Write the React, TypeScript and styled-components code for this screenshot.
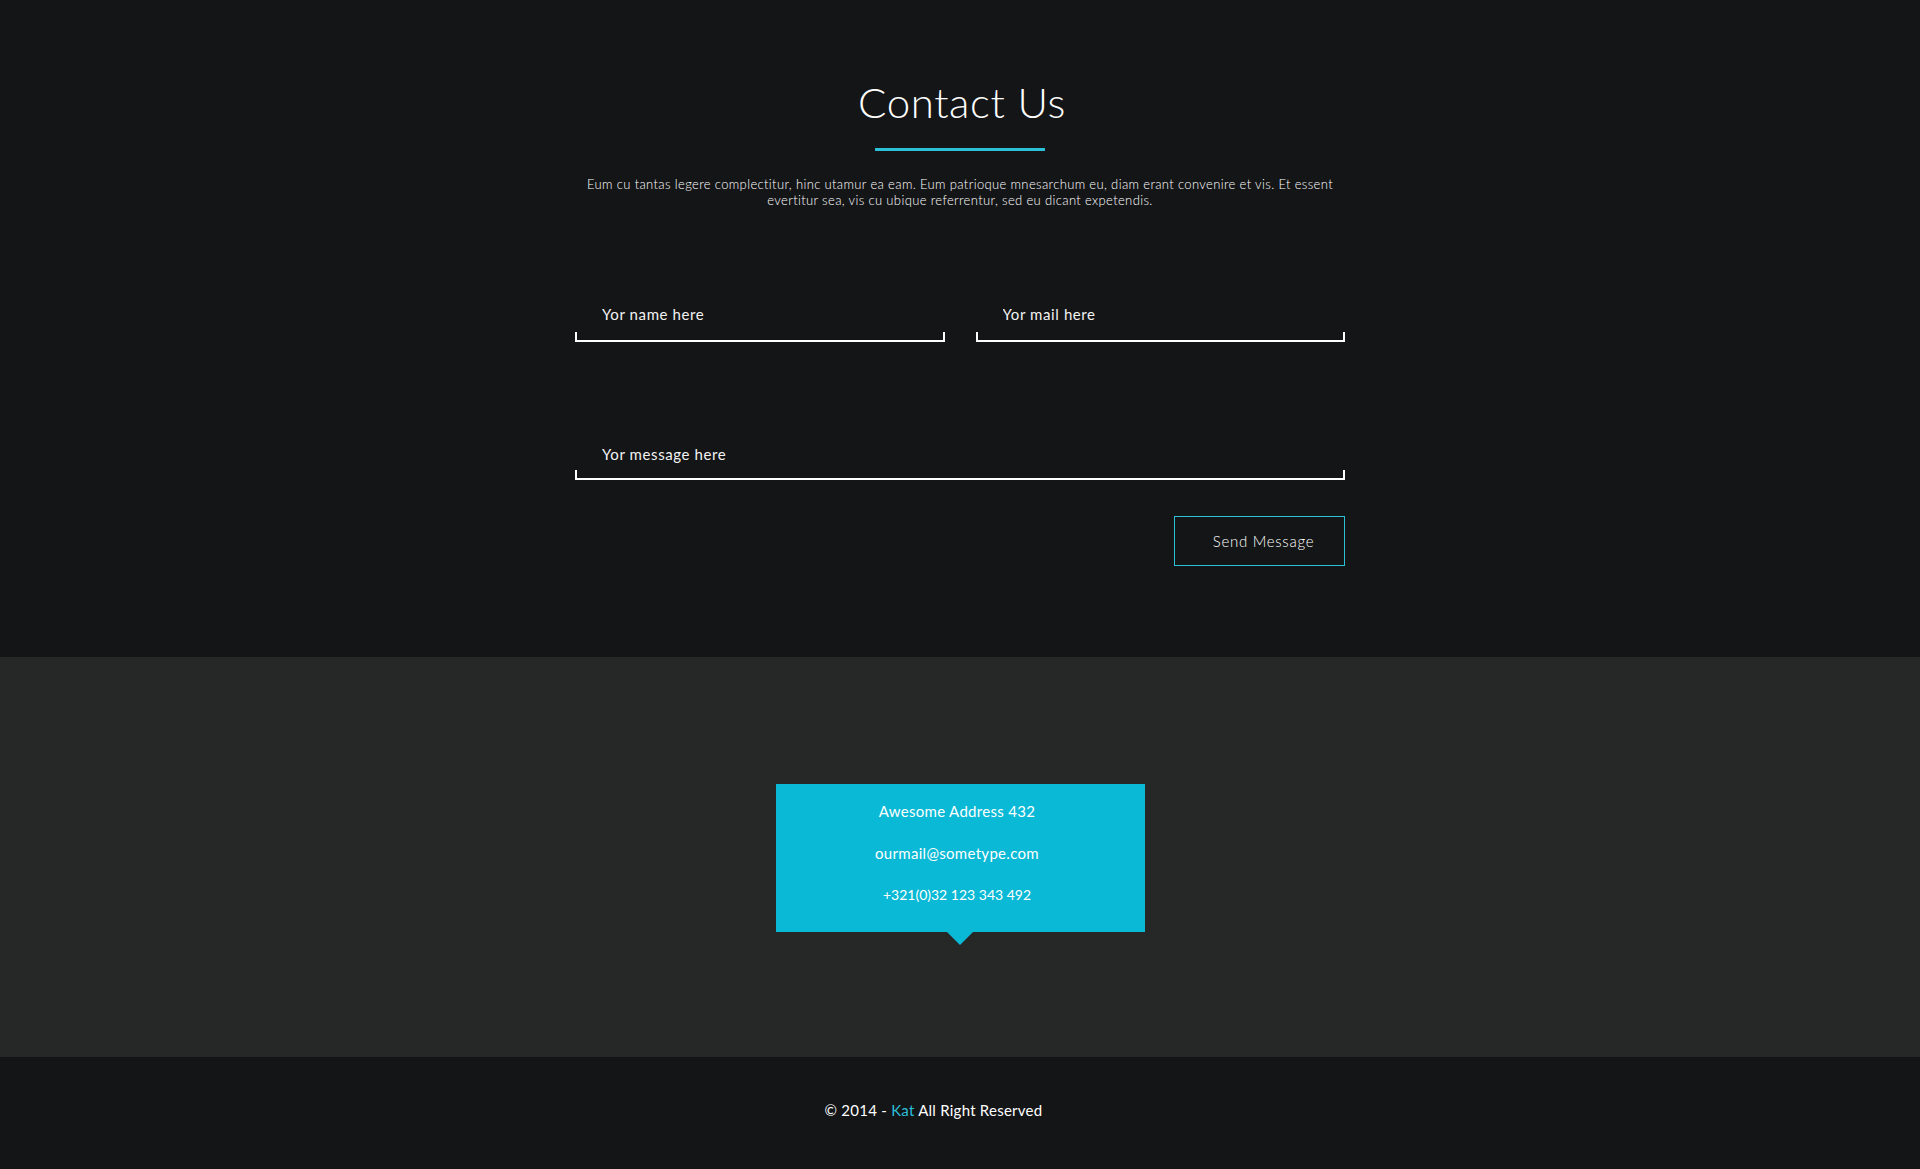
import React from "react";
import styled, { createGlobalStyle } from "styled-components";

const Global = createGlobalStyle`
  html, body { margin: 0; padding: 0; background: #141517; }
  body { font-family: Lato, "Open Sans", sans-serif; color: #fff; }
  * { box-sizing: border-box; }
`;

const Page = styled.div`
  display: flex;
  flex-direction: column;
  min-height: 1169px;
`;

const ContactSection = styled.section`
  background: #141517;
  height: 657px;
  padding-top: 78px;
  display: flex;
  flex-direction: column;
  align-items: center;
`;

const Title = styled.h1`
  margin: 0;
  font-family: Lato, sans-serif;
  font-weight: 300;
  font-size: 42px;
  line-height: 48px;
  letter-spacing: 0.6px;
  color: #fff;
  padding-left: 4px;
`;

const Underline = styled.div`
  width: 170px;
  height: 3px;
  background: #2bbfd8;
  margin-top: 22px;
`;

const Intro = styled.p`
  margin: 25px 0 0;
  width: 800px;
  text-align: center;
  font-family: Lato, sans-serif;
  font-weight: 300;
  font-size: 13px;
  line-height: 16px;
  letter-spacing: 0.36px;
  color: #ffffff;
`;

const Form = styled.form`
  width: 770px;
  margin-top: 94px;
  display: flex;
  flex-direction: column;
`;

const Row = styled.div<{ $gap?: number }>`
  display: flex;
  gap: 31px;
  margin-top: ${(p) => p.$gap ?? 0}px;
`;

const Field = styled.label`
  flex: 1;
  display: flex;
  flex-direction: column;
`;

const Input = styled.input`
  height: 24px;
  padding: 0 0 0 27px;
  background: transparent;
  border: none;
  outline: none;
  font-family: Lato, sans-serif;
  font-size: 15px;
  letter-spacing: 0.6px;
  color: #fff;
  &::placeholder { color: #f2f2f2; opacity: 1; }
`;

const Bracket = styled.div<{ $offset?: number }>`
  margin-top: ${(p) => p.$offset ?? 6}px;
  height: 10px;
  border: 2px solid #fff;
  border-top: none;
`;

const Actions = styled.div`
  display: flex;
  justify-content: flex-end;
  margin-top: 36px;
`;

const SendButton = styled.button`
  width: 171px;
  height: 50px;
  background: transparent;
  border: 1px solid #2bbfd8;
  color: #fff;
  font-family: Lato, sans-serif;
  font-weight: 300;
  font-size: 15px;
  letter-spacing: 0.7px;
  padding: 0 0 0 8px;
  cursor: pointer;
`;

const InfoSection = styled.section`
  background: #262828;
  height: 400px;
  padding-top: 127px;
  display: flex;
  justify-content: center;
  align-items: flex-start;
`;

const InfoBox = styled.div`
  position: relative;
  width: 369px;
  background: #09b9d5;
  padding: 6px 0 16px;
  display: flex;
  flex-direction: column;
  align-items: center;
  &::after {
    content: "";
    position: absolute;
    left: 50%;
    bottom: -13px;
    margin-left: -13px;
    border-left: 13px solid transparent;
    border-right: 13px solid transparent;
    border-top: 13px solid #09b9d5;
  }
`;

const InfoLine = styled.div<{ $tight?: boolean }>`
  height: 42px;
  line-height: 42px;
  font-family: Lato, sans-serif;
  font-size: ${(p) => (p.$tight ? 14 : 15)}px;
  letter-spacing: ${(p) => (p.$tight ? 0 : 0.3)}px;
  color: #fff;
  margin-right: 6px;
`;

const Footer = styled.footer`
  flex: 1;
  background: #141517;
  padding-top: 43px;
  text-align: center;
`;

const FooterText = styled.p`
  margin: 0;
  line-height: 20px;
  font-family: Lato, sans-serif;
  font-size: 15px;
  letter-spacing: 0.25px;
  color: #fff;
  padding-right: 53px;
`;

const Accent = styled.span`
  color: #2bbfd8;
`;

export default function App() {
  return (
    <Page>
      <Global />
      <ContactSection>
        <Title>Contact Us</Title>
        <Underline />
        <Intro>
          Eum cu tantas legere complectitur, hinc utamur ea eam. Eum patrioque mnesarchum eu, diam erant convenire et vis. Et essent
          <br />
          evertitur sea, vis cu ubique referrentur, sed eu dicant expetendis.
        </Intro>
        <Form onSubmit={(e) => e.preventDefault()}>
          <Row>
            <Field>
              <Input placeholder="Yor name here" />
              <Bracket />
            </Field>
            <Field>
              <Input placeholder="Yor mail here" />
              <Bracket />
            </Field>
          </Row>
          <Row $gap={100}>
            <Field>
              <Input placeholder="Yor message here" />
              <Bracket $offset={4} />
            </Field>
          </Row>
          <Actions>
            <SendButton type="submit">Send Message</SendButton>
          </Actions>
        </Form>
      </ContactSection>
      <InfoSection>
        <InfoBox>
          <InfoLine>Awesome Address 432</InfoLine>
          <InfoLine>ourmail@sometype.com</InfoLine>
          <InfoLine $tight>+321(0)32 123 343 492</InfoLine>
        </InfoBox>
      </InfoSection>
      <Footer>
        <FooterText>
          © 2014 - <Accent>Kat</Accent> All Right Reserved
        </FooterText>
      </Footer>
    </Page>
  );
}
